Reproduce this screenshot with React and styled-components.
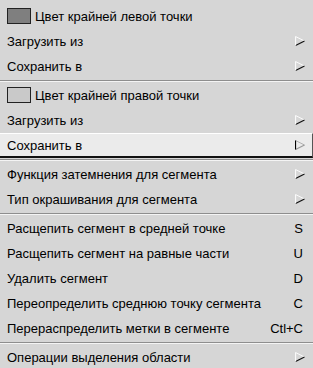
import React from "react";
import styled, { createGlobalStyle } from "styled-components";

const GlobalStyle = createGlobalStyle`
  html, body {
    margin: 0;
    padding: 0;
    background: #d6d6d6;
  }
  body {
    font-family: "Liberation Sans", Arial, sans-serif;
  }
`;

const items = [
  { type: "color", label: "Цвет крайней левой точки", swatch: "#7f7f7f" },
  { label: "Загрузить из", sub: true },
  { label: "Сохранить в", sub: true },
  { type: "sep" },
  { type: "color", label: "Цвет крайней правой точки", swatch: "#c9c9c9" },
  { label: "Загрузить из", sub: true },
  { label: "Сохранить в", sub: true, active: true },
  { type: "sep" },
  { label: "Функция затемнения для сегмента", sub: true },
  { label: "Тип окрашивания для сегмента", sub: true },
  { type: "sep" },
  { label: "Расщепить сегмент в средней точке", key: "S" },
  { label: "Расщепить сегмент на равные части", key: "U" },
  { label: "Удалить сегмент", key: "D" },
  { label: "Переопределить среднюю точку сегмента", key: "C" },
  { label: "Перераспределить метки в сегменте", key: "Ctl+C" },
  { type: "sep" },
  { label: "Операции выделения области", sub: true }
];

// bevelled submenu triangle: light top/left, dark bottom (pressed: dark left)
const Arrow = ({ pressed }) => (
  <svg width="10" height="10" viewBox="0 0 10 10">
    <line x1="0.5" y1="0.5" x2="9.5" y2="5" stroke={pressed ? "#b0b0b0" : "#fafafa"} strokeWidth="1" />
    <line x1="0.5" y1="9.5" x2="9.5" y2="5" stroke={pressed ? "#9a9a9a" : "#111"} strokeWidth="1.2" />
    <line x1="0.5" y1="0.5" x2="0.5" y2="9.5" stroke={pressed ? "#000" : "#fafafa"} strokeWidth="1.2" />
  </svg>
);

const App = () => (
  <>
    <GlobalStyle />
    <Menu>
      {items.map((item, i) => {
        if (item.type === "sep") return <Separator key={i} />;
        return (
          <Row key={i} $active={item.active}>
            {item.type === "color" && <Swatch $color={item.swatch} />}
            <Label>{item.label}</Label>
            {item.sub && (
              <ArrowBox>
                <Arrow pressed={item.active} />
              </ArrowBox>
            )}
            {item.key && <Shortcut>{item.key}</Shortcut>}
          </Row>
        );
      })}
    </Menu>
  </>
);

const Menu = styled.div`
  width: 313px;
  height: 368px;
  overflow: hidden;
  box-sizing: border-box;
  padding-top: 4px;
  background: #d6d6d6;
  display: flex;
  flex-direction: column;
`;

const Row = styled.div`
  flex: none;
  display: flex;
  align-items: center;
  height: 25px;
  box-sizing: border-box;
  padding: 0 7px 0 7px;
  font-size: 13px;
  color: #000;
  background: ${p => (p.$active ? "#ebebeb" : "transparent")};
  border-top: 1px solid ${p => (p.$active ? "#ffffff" : "transparent")};
  border-bottom: 2px solid ${p => (p.$active ? "#111" : "transparent")};
  border-right: 1px solid ${p => (p.$active ? "#555" : "transparent")};
`;

const Swatch = styled.span`
  width: 22px;
  height: 14px;
  margin-right: 4px;
  background: ${p => p.$color};
  border: 1px solid #222;
  flex: none;
`;

const Label = styled.span`
  flex: 1;
  white-space: nowrap;
`;

const ArrowBox = styled.span`
  display: flex;
`;

const Shortcut = styled.span`
  margin-right: 2px;
`;

const Separator = styled.div`
  flex: none;
  height: 4px;
  box-sizing: border-box;
  padding-top: 1px;
  &::before {
    content: "";
    display: block;
    border-top: 1px solid #8e8e8e;
    border-bottom: 1px solid #f4f4f4;
  }
`;

export default App;
